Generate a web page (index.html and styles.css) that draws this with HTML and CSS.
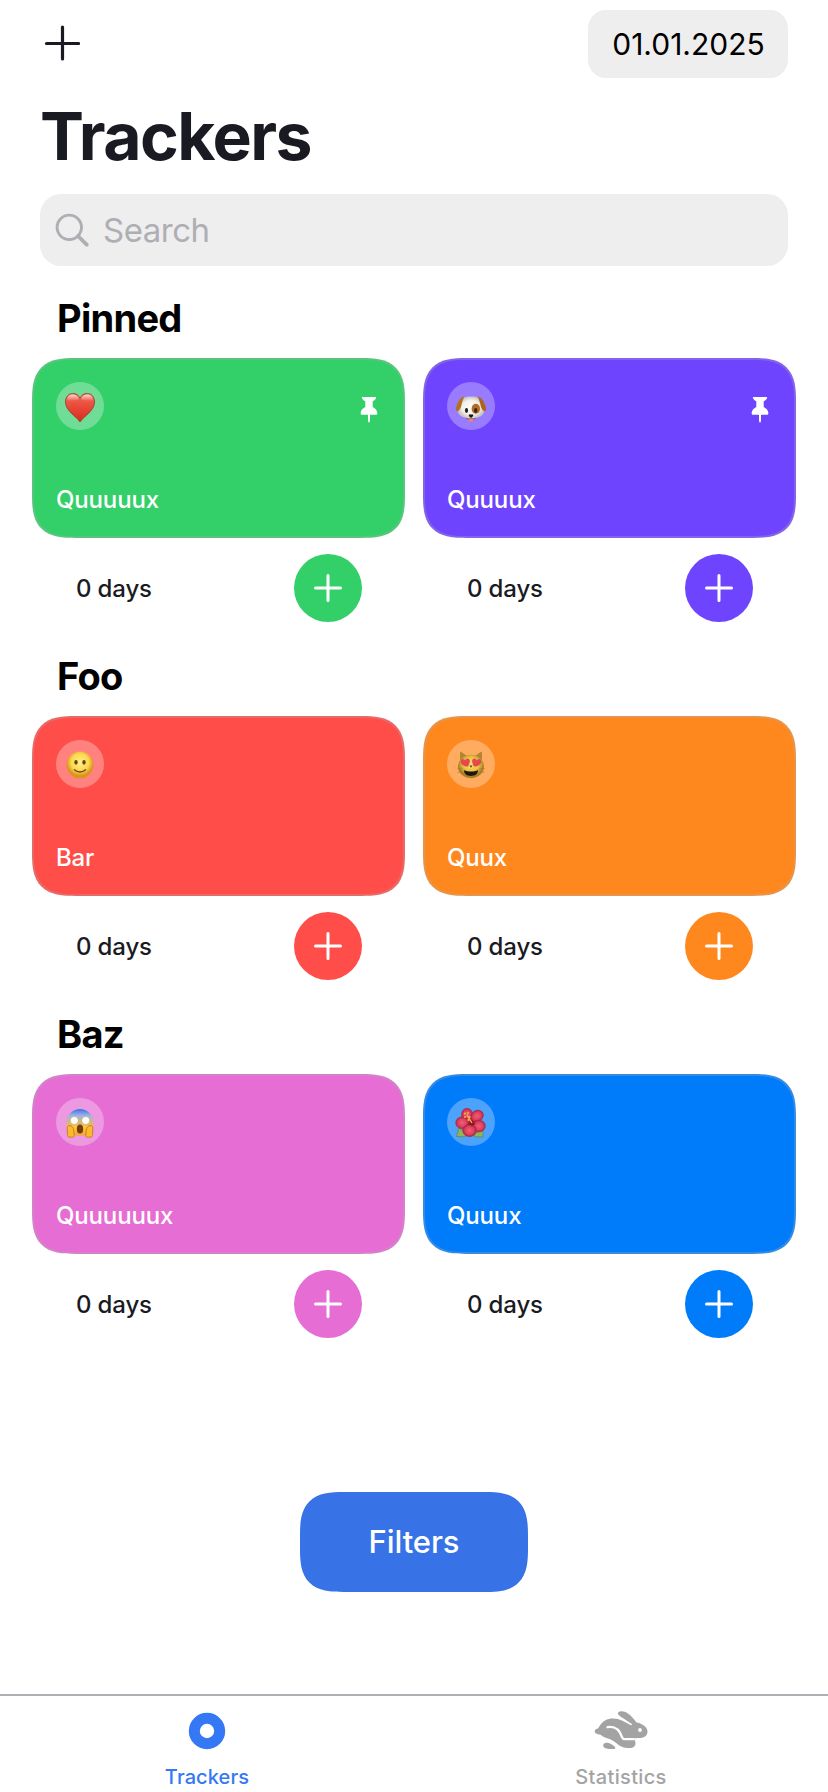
FILE: index.html
```html
<!DOCTYPE html>
<html lang="en">
<head>
<meta charset="utf-8">
<title>Trackers</title>
<link rel="stylesheet" href="styles.css">
</head>
<body>
<svg class="defs" width="0" height="0" aria-hidden="true">
  <defs>
    <symbol id="plus" viewBox="0 0 28 28"><path d="M14 1.500v25M1.500 14h25" fill="none" stroke="currentColor" stroke-width="3" stroke-linecap="round"/></symbol>
    <symbol id="pin" viewBox="0 0 18 26"><path d="M2.600 0h12.800c.6 0 .9.500.7 1-.6 1.500-2 2.500-3.400 3.300V10c2.800 1.300 4.500 3.600 4.700 6.300 0 .9-.5 1.500-1.400 1.500H10V24l-1 2-1-2v-6.200H2c-.9 0-1.400-.6-1.400-1.500C.8 13.600 2.500 11.300 5.300 10V4.300C3.900 3.500 2.500 2.500 1.900 1c-.2-.5.1-1 .7-1z" fill="currentColor"/></symbol>
    <linearGradient id="heart" x2="0" y2="1"><stop offset="0" stop-color="#f4695b"/><stop offset=".45" stop-color="#e94a39"/><stop offset="1" stop-color="#d92a1e"/></linearGradient>
    <linearGradient id="shine" x2="0" y2="1"><stop offset="0" stop-color="#fff" stop-opacity=".75"/><stop offset="1" stop-color="#fff" stop-opacity="0"/></linearGradient>
    <radialGradient id="face" cy=".4"><stop offset="0" stop-color="#fff08a"/><stop offset=".65" stop-color="#fbd84f"/><stop offset="1" stop-color="#dc9420"/></radialGradient>
    <radialGradient id="cat" cy=".4"><stop offset="0" stop-color="#fbe16a"/><stop offset=".6" stop-color="#eac243"/><stop offset="1" stop-color="#a77e26"/></radialGradient>
    <linearGradient id="scream" x2="0" y2="1"><stop offset="0" stop-color="#3f6fe4"/><stop offset=".25" stop-color="#9db4ea"/><stop offset=".5" stop-color="#d9b76c"/><stop offset=".7" stop-color="#fcc839"/><stop offset="1" stop-color="#f3a522"/></linearGradient>
    <radialGradient id="fur"><stop offset="0" stop-color="#fff"/><stop offset=".65" stop-color="#f4f1ec"/><stop offset="1" stop-color="#c9c1bd"/></radialGradient>
    <radialGradient id="petal"><stop offset="0" stop-color="#ee6079"/><stop offset=".65" stop-color="#de3f5c"/><stop offset="1" stop-color="#ad2340"/></radialGradient>
  </defs>
</svg>

<header class="top">
  <div class="toolbar">
    <svg class="add" viewBox="0 0 36 36"><path d="M18.500 2v32M2.500 18.500h32" fill="none" stroke="#1a1b22" stroke-width="3.200" stroke-linecap="round"/></svg>
    <div class="date">01.01.2025</div>
  </div>
  <h1 class="title">Trackers</h1>
  <div class="search">
    <svg class="glass" viewBox="0 0 34 34"><circle cx="14.300" cy="14.300" r="12.200" fill="none" stroke="currentColor" stroke-width="2.900"/><path d="M23 23l8.700 8.700" stroke="currentColor" stroke-width="3.800" stroke-linecap="round"/></svg>
    <span>Search</span>
  </div>
</header>

<main class="content">
  <section class="group">
    <h2>Pinned</h2>
    <div class="row">
      <article class="tracker green">
        <div class="card">
          <div class="marks">
            <div class="emoji"><svg viewBox="0 0 48 48"><path d="M24 40C20 34 9.500 29 9.500 20c0-5 3-8.500 7.300-8.500 3.400 0 5.900 1.700 7.200 4.800 1.300-3.100 3.800-4.800 7.200-4.800 4.300 0 7.300 3.500 7.300 8.500C38.500 29 28 34 24 40z" fill="url(#heart)" stroke="#983c28" stroke-width=".8"/><path d="M10.700 19c0-3.800 2.400-6.500 6-6.500 3.200 0 5.500 1.700 6.500 4.500-3 2-9 2-12.500 2zm26.600 0c0-3.800-2.400-6.500-6-6.500-3.200 0-5.500 1.700-6.500 4.500 3 2 9 2 12.500 2z" fill="url(#shine)"/></svg></div>
            <svg class="pin"><use href="#pin"/></svg>
          </div>
          <p>Quuuuux</p>
        </div>
        <div class="progress"><span>0 days</span><button><svg><use href="#plus"/></svg></button></div>
      </article>
      <article class="tracker violet">
        <div class="card">
          <div class="marks">
            <div class="emoji"><svg viewBox="0 0 48 48"><ellipse cx="24" cy="37" rx="2.600" ry="3" fill="#ee7d85"/><path d="M15 16c3-2 15-2 18 0 3 3 2.500 8 4 11 1.500 6-5 9.500-13 9.500S9.500 33 11 27c1.500-3 1-8 4-11z" fill="url(#fur)"/><path d="M17.500 14.700c-4 .3-6 4-7.600 8.300-.9 2.500-1.500 5-.4 5.900 2 1 3.700-1.700 4.600-4.500.8-3 1.500-7 3.400-9.700z" fill="#b4711d"/><path d="M30.500 14.700c4 .3 6 4 7.600 8.300.9 2.500 1.500 5 .4 5.900-2 1-3.700-1.700-4.600-4.500-.8-3-1.500-7-3.400-9.700z" fill="#ad6518"/><ellipse cx="28.800" cy="26.800" rx="4.200" ry="5" fill="#b36a24"/><ellipse cx="19.500" cy="28.500" rx="1.600" ry="2.400" fill="#25201e"/><ellipse cx="28.700" cy="28.500" rx="1.600" ry="2.400" fill="#35241b"/><path d="M21.800 32.500h4.400c.3 1.800-1 2.800-2.200 3.200-1.200-.4-2.500-1.400-2.200-3.200z" fill="#17120f"/><path d="M24 35v1c-1.500 1.300-4 1.200-5.200.3M24 36c1.500 1.300 4 1.200 5.200.3" fill="none" stroke="#6b5a52" stroke-width=".7"/></svg></div>
            <svg class="pin"><use href="#pin"/></svg>
          </div>
          <p>Quuuux</p>
        </div>
        <div class="progress"><span>0 days</span><button><svg><use href="#plus"/></svg></button></div>
      </article>
    </div>
  </section>

  <section class="group">
    <h2>Foo</h2>
    <div class="row">
      <article class="tracker red">
        <div class="card">
          <div class="marks">
            <div class="emoji"><svg viewBox="0 0 48 48"><circle cx="24" cy="25" r="13.400" fill="url(#face)"/><ellipse cx="20" cy="22.300" rx="1.700" ry="2.400" fill="#6b4212"/><ellipse cx="28" cy="22.300" rx="1.700" ry="2.400" fill="#6b4212"/><path d="M18.500 29.700c3 3 8 3 11 0" fill="none" stroke="#7a4b14" stroke-width="1.400" stroke-linecap="round"/></svg></div>
          </div>
          <p>Bar</p>
        </div>
        <div class="progress"><span>0 days</span><button><svg><use href="#plus"/></svg></button></div>
      </article>
      <article class="tracker orange">
        <div class="card">
          <div class="marks">
            <div class="emoji"><svg viewBox="0 0 48 48"><path d="M13 21V12.500c0-.8.700-1 1.300-.6L20 16h8l5.700-4.100c.6-.4 1.300-.2 1.300.6V21z" fill="#b58430"/><ellipse cx="24" cy="26.500" rx="13" ry="11.700" fill="url(#cat)"/><path d="M10.500 28.500l5 .5M10.500 32.500l5-1.500M37.500 28.500l-5 .5M37.500 32.500l-5-1.500" stroke="#9d7430" stroke-width=".6"/><path d="M17 30.300c4 1.700 10 1.700 14 0 0 3.700-3 5.700-7 5.700s-7-2-7-5.700z" fill="#22150f"/><path d="M22.500 25.500h3L24 27.800z" fill="#57402d"/><path d="M20.800 26.500c-3 .3-6.600-1.600-7-4.800-.2-1.700 1.300-2.900 2.700-2.500.9.200 1.500.7 1.800 1.400.2-1.200 1-2 2.200-2 1.500 0 2.500 1.200 2.300 2.900-.2 1.900-.9 3.700-2 5z" fill="#e5484f"/><path d="M27.200 26.500c3 .3 6.600-1.600 7-4.800.2-1.700-1.300-2.900-2.700-2.500-.9.200-1.500.7-1.800 1.400-.2-1.200-1-2-2.200-2-1.500 0-2.500 1.200-2.300 2.900.2 1.900.9 3.700 2 5z" fill="#e5484f"/></svg></div>
          </div>
          <p>Quux</p>
        </div>
        <div class="progress"><span>0 days</span><button><svg><use href="#plus"/></svg></button></div>
      </article>
    </div>
  </section>

  <section class="group">
    <h2>Baz</h2>
    <div class="row">
      <article class="tracker pink">
        <div class="card">
          <div class="marks">
            <div class="emoji"><svg viewBox="0 0 48 48"><circle cx="24" cy="24.300" r="13.300" fill="url(#scream)"/><circle cx="18.300" cy="22.500" r="4" fill="#fff" stroke="#b29868" stroke-width=".5"/><circle cx="29.700" cy="22.500" r="4" fill="#fff" stroke="#b29868" stroke-width=".5"/><ellipse cx="24" cy="31" rx="3.200" ry="4.600" fill="#743b15"/><path d="M13 27.500c3 0 4.500 2 4.700 5l.6 4.500c.2 1.700-1.300 2.500-2.800 2.300l-3-.5c-1-.2-1-1-1-2l-.3-6.300c0-2 .6-3 1.800-3zM35 27.500c-3 0-4.500 2-4.700 5l-.6 4.500c-.2 1.700 1.300 2.500 2.800 2.300l3-.5c1-.2 1-1 1-2l.3-6.300c0-2-.6-3-1.800-3z" fill="#fab932" stroke="#c97812" stroke-width=".9"/></svg></div>
          </div>
          <p>Quuuuuux</p>
        </div>
        <div class="progress"><span>0 days</span><button><svg><use href="#plus"/></svg></button></div>
      </article>
      <article class="tracker blue">
        <div class="card">
          <div class="marks">
            <div class="emoji"><svg viewBox="0 0 48 48"><path d="M12 30l-2.500 8.500 8 .3 3-3zM36 32l-.2 7-8-.2-1-3z" fill="#8fb45b" stroke="#55802f" stroke-width=".6"/><path d="M17 18h13l5 10-11 6-9-8z" fill="#b3263f"/><g fill="url(#petal)" stroke="#a3213d" stroke-width=".4"><ellipse cx="20" cy="16.500" rx="5.600" ry="6.200"/><ellipse cx="30" cy="18" rx="6.700" ry="5.600" transform="rotate(-30 30 18)"/><ellipse cx="15.200" cy="24.800" rx="6.600" ry="6"/><ellipse cx="32" cy="28" rx="6.400" ry="6"/><ellipse cx="22.500" cy="32.500" rx="6.800" ry="6.200"/></g><path d="M21 26l4-4 3 4-3 2z" fill="#8b152d"/><path d="M25 25l-5-8" stroke="#eebf3d" stroke-width="1.300"/><g fill="#f5bd4d"><circle cx="18" cy="15.500" r=".9"/><circle cx="21" cy="15" r=".9"/><circle cx="18" cy="19" r=".9"/><circle cx="22.500" cy="19" r="1.100"/><circle cx="21.500" cy="22" r="1.100"/></g></svg></div>
          </div>
          <p>Quuux</p>
        </div>
        <div class="progress"><span>0 days</span><button><svg><use href="#plus"/></svg></button></div>
      </article>
    </div>
  </section>
  <button class="filters">Filters</button>
</main>

<nav class="tabs">
  <a class="tab active">
    <svg class="dot" viewBox="0 0 54 40"><circle cx="27" cy="21" r="12.700" fill="none" stroke="currentColor" stroke-width="11"/></svg>
    <span>Trackers</span>
  </a>
  <a class="tab stats">
    <svg class="hare" viewBox="0 0 54 40"><path d="M1.500 19.500C2.500 18.500 4 19 5 17c3-6 8.500-8.500 14-8.500 7 0 11 3 17.500 6.500 1 .5 2-.5 1-1.200L28 7.500c-2-1.500-4.500-3-4-4.500.8-2.500 6-2.500 10 .5 3.500 2.500 6 5.500 8.500 9 5 .5 11 4.500 11 9 0 4-3 6.500-8 6.500-3.500 0-6 .5-7.500 1 2.500.5 3.500 1.500 3.500 4 0 3.500-2 5-6 5-6 0-9-1.500-12-4-3-2.300-5-4-8-5-3-1-6-1.500-8.500-4C4.500 24 2 24 1 22.500c-.5-1-.3-2 .5-3z" fill="currentColor"/><path d="M13.500 17.200c8.500-1.500 12.500 4 14.500 10 .5 1.400 1.500 2.300 3.500 2h8" fill="none" stroke="#fff" stroke-width="2.200" stroke-linecap="round"/><path d="M11 33c3-1 6 .5 9 3 2 1.500 1.500 3-.5 3-4 0-8 0-9.800-2-1.200-1.500-.4-3.500 1.300-4z" fill="currentColor"/><circle cx="46" cy="20" r="1.900" fill="#fff"/></svg>
    <span>Statistics</span>
  </a>
</nav>
</body>
</html>
```

FILE: styles.css
```css
* { box-sizing: border-box; margin: 0; padding: 0; }

body {
  width: 828px;
  height: 1792px;
  display: flex;
  flex-direction: column;
  overflow: hidden;
  background: #fff;
  color: #1a1b22;
  font-family: Inter, "Liberation Sans", sans-serif;
}

svg { display: block; flex: none; }
button { border: 0; font: inherit; color: #fff; }
.defs { position: absolute; }

.top { padding: 10px 40px 0; }
.toolbar { display: flex; justify-content: space-between; height: 68px; }
.add { width: 36px; height: 36px; margin: 15px 0 0 4px; }
.date {
  width: 200px;
  height: 68px;
  padding-left: 1px;
  border-radius: 18px;
  background: #eeeeef;
  color: #000;
  font-size: 30px;
  line-height: 69px;
  text-align: center;
}
.title {
  height: 80px;
  margin: 18px 0;
  font-size: 66px;
  font-weight: 700;
  letter-spacing: -1.55px;
  line-height: 80px;
}
.search {
  display: flex;
  align-items: center;
  gap: 14px;
  height: 72px;
  padding-left: 15px;
  border-radius: 21px;
  background: #eeeeef;
  color: #aeafb4;
  font-size: 33px;
  letter-spacing: -.5px;
}
.glass { width: 34px; height: 34px; }

.content { flex: 1; padding: 0 32px; }
.group { height: 358px; padding-top: 29px; }
.group h2 {
  height: 46px;
  margin: 0 0 17px 25px;
  color: #000;
  font-size: 38px;
  font-weight: 700;
  letter-spacing: -.7px;
  line-height: 46px;
}
.row { display: grid; grid-template-columns: 1fr 1fr; gap: 18px; }
.card {
  display: flex;
  flex-direction: column;
  justify-content: space-between;
  height: 180px;
  padding: 22px 22px 21px;
  border: 2px solid rgba(174, 175, 180, .3);
  border-radius: 35px;
  background: var(--tint);
  background-clip: border-box;
  color: #fff;
}
.marks { display: flex; justify-content: space-between; }
.emoji { width: 48px; height: 48px; border-radius: 50%; background: rgba(255, 255, 255, .3); }
.emoji svg { width: 48px; height: 48px; }
.pin { width: 18px; height: 26px; margin: 15px 3px 0 0; }
.card p, .progress {
  font-size: 24px;
  font-weight: 500;
  letter-spacing: -.15px;
  line-height: 30px;
}
.progress {
  display: flex;
  align-items: center;
  justify-content: space-between;
  height: 68px;
  margin-top: 16px;
  padding: 0 43px 0 44px;
}
.progress span { padding-top: 2px; }
.progress button {
  display: grid;
  place-items: center;
  width: 68px;
  height: 68px;
  border-radius: 50%;
  background: var(--tint);
}
.progress button svg { width: 28px; height: 28px; }

.green { --tint: #33cf69; }
.violet { --tint: #6e44fe; }
.red { --tint: #ff4d49; }
.orange { --tint: #ff881e; }
.pink { --tint: #e66dd4; }
.blue { --tint: #007bfa; }

.filters {
  display: block;
  width: 228px;
  height: 100px;
  margin: 152px auto 0;
  border-radius: 36px;
  background: #3772e7;
  font-size: 31px;
  font-weight: 500;
  letter-spacing: -.1px;
  line-height: 100px;
}

@supports (corner-shape: superellipse(1.5)) {
  .card, .filters { border-radius: 44px; corner-shape: superellipse(1.53); }
}

.tabs {
  display: grid;
  grid-template-columns: 1fr 1fr;
  height: 98px;
  border-top: 2px solid #aeafb4;
}
.tab {
  display: flex;
  flex-direction: column;
  align-items: center;
  padding-top: 14px;
  color: #a3a3a3;
  font-size: 20px;
  font-weight: 500;
  letter-spacing: .1px;
  line-height: 24px;
}
.stats { letter-spacing: .35px; }
.tab svg { width: 54px; height: 40px; margin-bottom: 15px; }
.tab.active { color: #3478f6; }
```
